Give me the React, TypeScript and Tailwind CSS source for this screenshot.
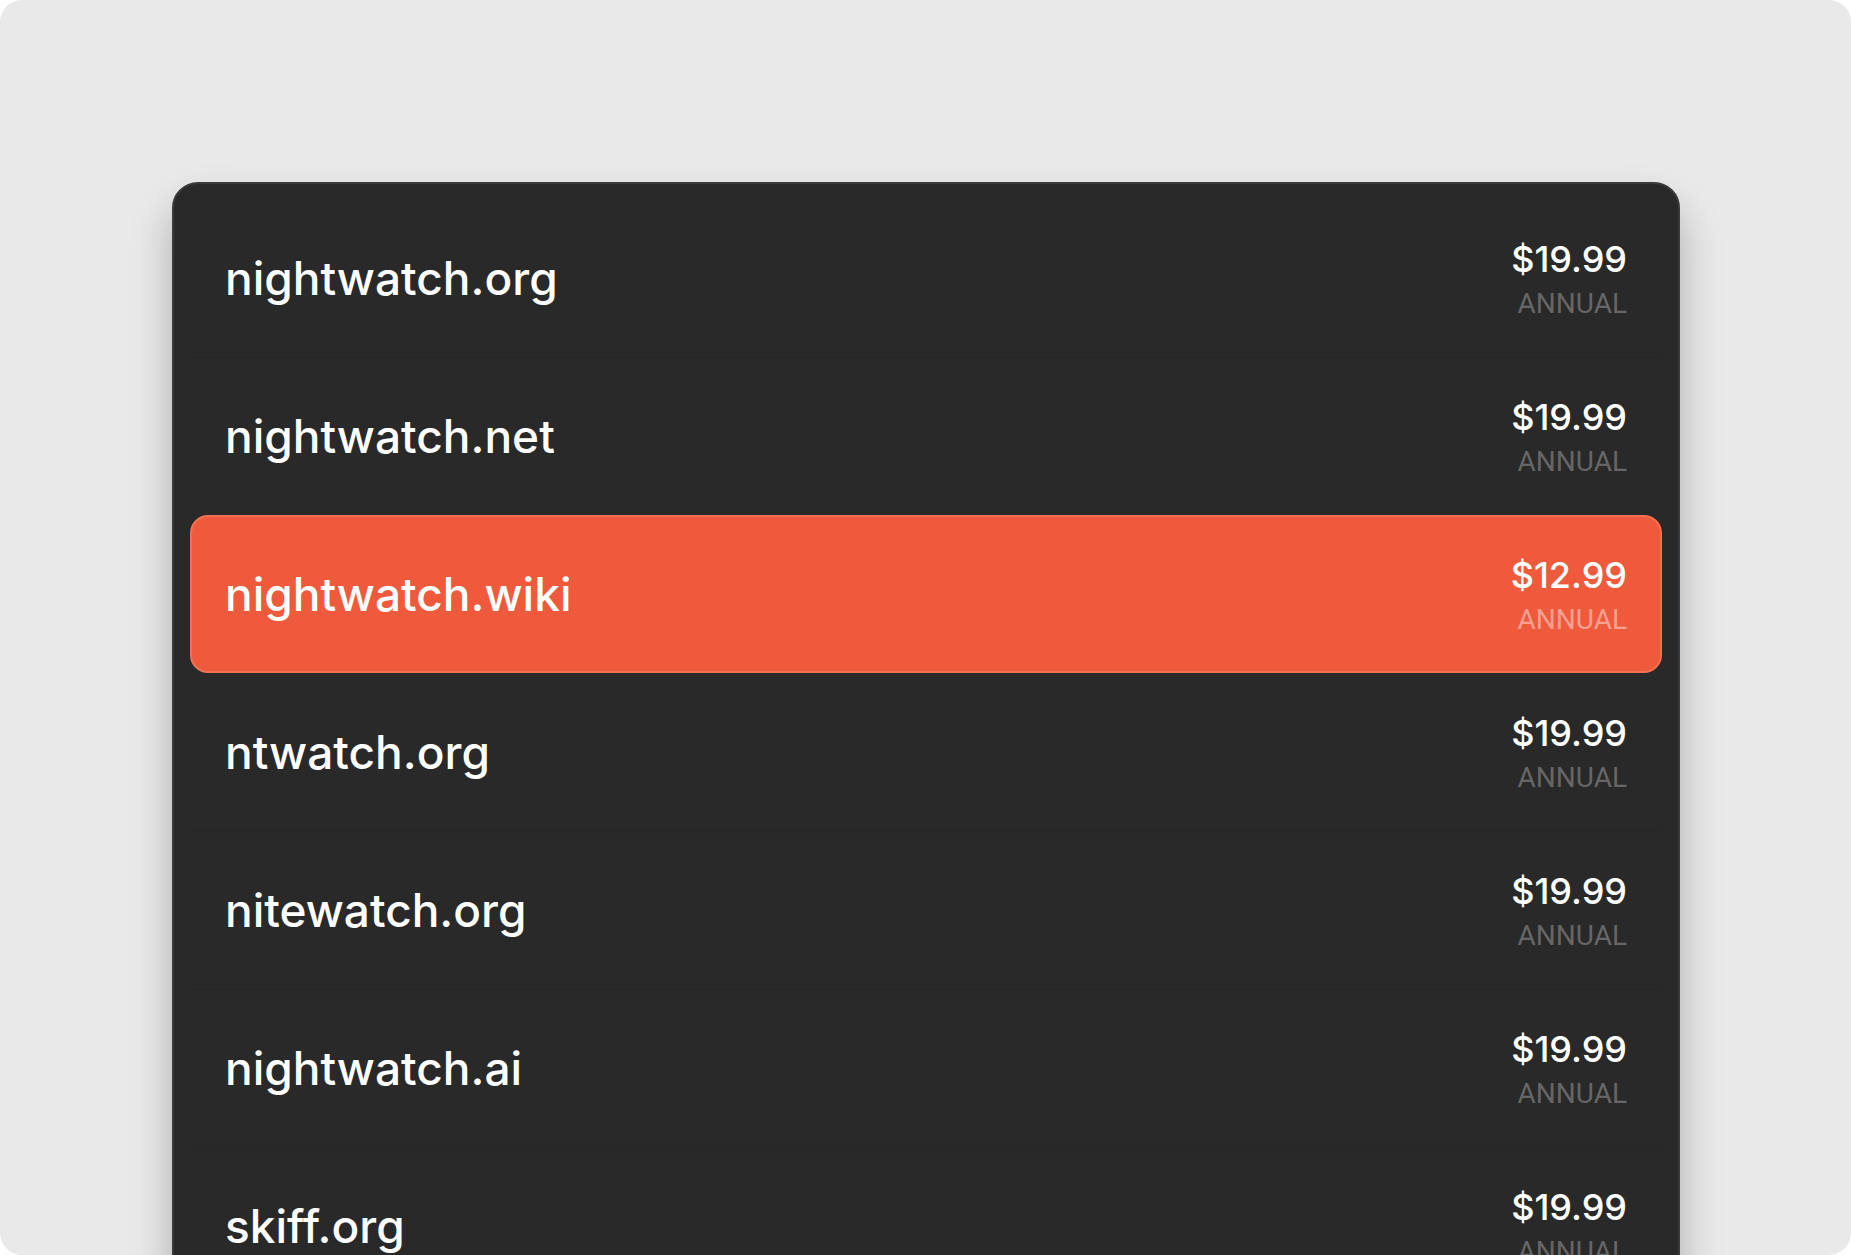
const domains = [
  { name: "nightwatch.org", price: "$19.99" },
  { name: "nightwatch.net", price: "$19.99" },
  { name: "nightwatch.wiki", price: "$12.99" },
  { name: "ntwatch.org", price: "$19.99" },
  { name: "nitewatch.org", price: "$19.99" },
  { name: "nightwatch.ai", price: "$19.99" },
  { name: "skiff.org", price: "$19.99" },
];

function DomainRow({ name, price, selected }: { name: string; price: string; selected: boolean }) {
  return (
    <li className={selected ? "" : "shadow-[0_1px_0_#262626]"}>
      <button
        type="button"
        aria-pressed={selected}
        className={
          "flex h-[158px] w-full items-center justify-between rounded-[18px] border-2 px-[33px] text-left text-white " +
          (selected ? "border-[#f27053] bg-[#f05a3c]" : "border-transparent")
        }
      >
        <span className="text-[46px] leading-[56px] font-medium">{name}</span>
        <span className="flex flex-col items-end pt-1">
          <span className="text-[36px] leading-[48px] font-medium">{price}</span>
          <span
            className={
              "font-['Roboto',sans-serif] text-[28px] leading-[42px] " +
              (selected ? "text-[#f8a192]" : "text-[#666666]")
            }
          >
            ANNUAL
          </span>
        </span>
      </button>
    </li>
  );
}

export default function App() {
  return (
    <div className="h-screen bg-white font-['Inter',sans-serif]">
      <main className="h-full overflow-hidden rounded-[22px] bg-[#e9e9e9] pt-[182px] pr-[171px] pl-[172px]">
        <ul className="rounded-[26px] border-2 border-[#3a3a3a] bg-[#292929] px-4 py-[15px] shadow-[0_24px_40px_rgba(0,0,0,0.26)]">
          {domains.map((d) => (
            <DomainRow key={d.name} name={d.name} price={d.price} selected={d.name === "nightwatch.wiki"} />
          ))}
        </ul>
      </main>
    </div>
  );
}
